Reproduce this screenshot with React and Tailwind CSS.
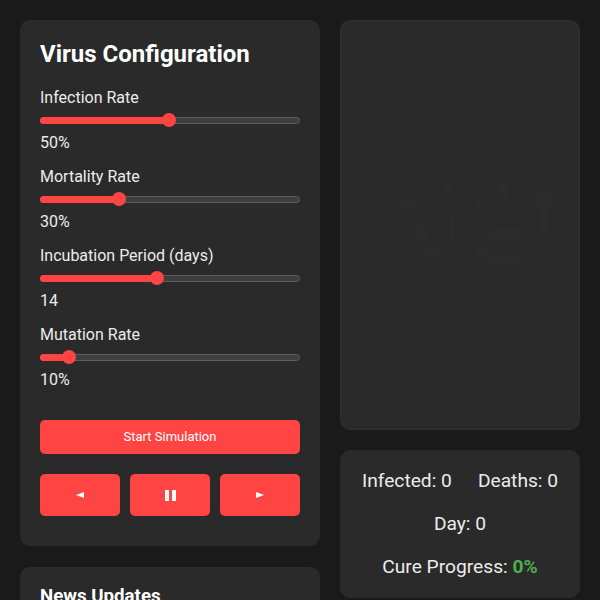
import { useState } from "react";

const sliders = [
  { key: "infection", label: "Infection Rate", min: 1, max: 100, value: 50, unit: "%" },
  { key: "mortality", label: "Mortality Rate", min: 1, max: 100, value: 30, unit: "%" },
  { key: "incubation", label: "Incubation Period (days)", min: 1, max: 30, value: 14, unit: "" },
  { key: "mutation", label: "Mutation Rate", min: 1, max: 100, value: 10, unit: "%" },
];

// faint blocks of the world map drawn on the simulation panel
const mapBlocks = [
  [60, 180, 15, 7],
  [78, 173, 5, 5],
  [104, 165, 6, 6],
  [123, 165, 6, 6],
  [141, 165, 7, 6],
  [157, 164, 10, 13],
  [165, 190, 6, 6],
  [195, 172, 17, 12],
  [200, 184, 6, 27],
  [76, 202, 11, 15],
  [108, 196, 5, 22],
  [134, 180, 6, 6],
  [133, 208, 6, 6],
  [148, 206, 32, 13],
  [83, 226, 17, 9],
  [135, 227, 12, 6],
  [148, 234, 32, 10],
];

function Slider({ label, min, max, value, unit }) {
  const pct = (value - min) / (max - min);
  const thumb = `calc(${pct} * (100% - 14px) + 7px)`;
  return (
    <div className="mb-[10px]">
      <div className="text-base leading-6 text-[#ececec]">{label}</div>
      <div className="relative mt-[3px] h-[14px]">
        <div className="absolute left-0 right-0 top-[4px] h-[7px] rounded-full border border-[#5e5e5e] bg-[#3e3e3e]" />
        <div
          className="absolute left-0 top-[4px] h-[7px] rounded-full bg-[#ff4444]"
          style={{ width: thumb }}
        />
        <div
          className="absolute top-0 h-[14px] w-[14px] -translate-x-1/2 rounded-full bg-[#ff4444]"
          style={{ left: thumb }}
        />
      </div>
      <div className="mt-[4px] text-base leading-6 text-[#ececec]">
        {value}
        {unit}
      </div>
    </div>
  );
}

export default function App() {
  const [stats] = useState({ infected: 0, deaths: 0, day: 0, cure: 0 });

  return (
    <div className="min-h-[600px] bg-[#1a1a1a] p-5 font-['Roboto',sans-serif] text-[#ececec]">
      <div className="grid grid-cols-[300px_240px] gap-5">
        <div className="flex flex-col gap-[21px]">
          <div className="rounded-[10px] bg-[#2a2a2a] px-5 pb-[30px] pt-5">
            <h2 className="mb-[18px] text-2xl font-bold leading-[28px] text-white">
              Virus Configuration
            </h2>
            {sliders.map((s) => (
              <Slider key={s.key} {...s} />
            ))}
            <button className="mt-[28px] flex h-[34px] w-full items-center justify-center rounded-[5px] bg-[#ff4444] text-[13px] text-white">
              Start Simulation
            </button>
            <div className="mt-[20px] grid grid-cols-3 gap-[10px]">
              <button className="flex h-[42px] items-center justify-center rounded-[5px] bg-[#ff4444] text-white">
                <svg width="8" height="6" viewBox="0 0 8 6">
                  <path d="M0 3 L8 0 L8 6 Z" fill="white" />
                </svg>
              </button>
              <button className="flex h-[42px] items-center justify-center gap-[3px] rounded-[5px] bg-[#ff4444]">
                <span className="h-[11px] w-[4px] bg-white" />
                <span className="h-[11px] w-[4px] bg-white" />
              </button>
              <button className="flex h-[42px] items-center justify-center rounded-[5px] bg-[#ff4444] text-white">
                <svg width="8" height="6" viewBox="0 0 8 6">
                  <path d="M8 3 L0 0 L0 6 Z" fill="white" />
                </svg>
              </button>
            </div>
          </div>
          <div className="rounded-[10px] bg-[#2a2a2a] px-5 pb-5 pt-5">
            <h3 className="text-[18.7px] font-bold leading-none text-white">News Updates</h3>
          </div>
        </div>

        <div className="flex flex-col gap-5">
          <div className="h-[410px] rounded-[10px] border border-[#2f2f2f] bg-[#2a2a2a]">
            <svg width="238" height="408" viewBox="0 0 238 408">
              <circle cx="48" cy="152" r="3" fill="#2c2c2c" />
              <circle cx="62" cy="215" r="3" fill="#2c2c2c" />
              <circle cx="127" cy="255" r="3" fill="#2c2c2c" />
              {mapBlocks.map(([x, y, w, h], i) => (
                <rect key={i} x={x} y={y} width={w} height={h} fill="#2c2c2c" />
              ))}
            </svg>
          </div>
          <div className="flex flex-col items-center gap-4 rounded-[10px] bg-[#2a2a2a] pb-[18px] pt-[17px] text-[19.2px] leading-[27px] text-[#ececec]">
            <div className="flex justify-center gap-[26px]">
              <span>Infected: {stats.infected}</span>
              <span>Deaths: {stats.deaths}</span>
            </div>
            <div>Day: {stats.day}</div>
            <div>
              Cure Progress:{" "}
              <span className="font-bold text-[#4caf50]">{stats.cure}%</span>
            </div>
          </div>
        </div>
      </div>
    </div>
  );
}
